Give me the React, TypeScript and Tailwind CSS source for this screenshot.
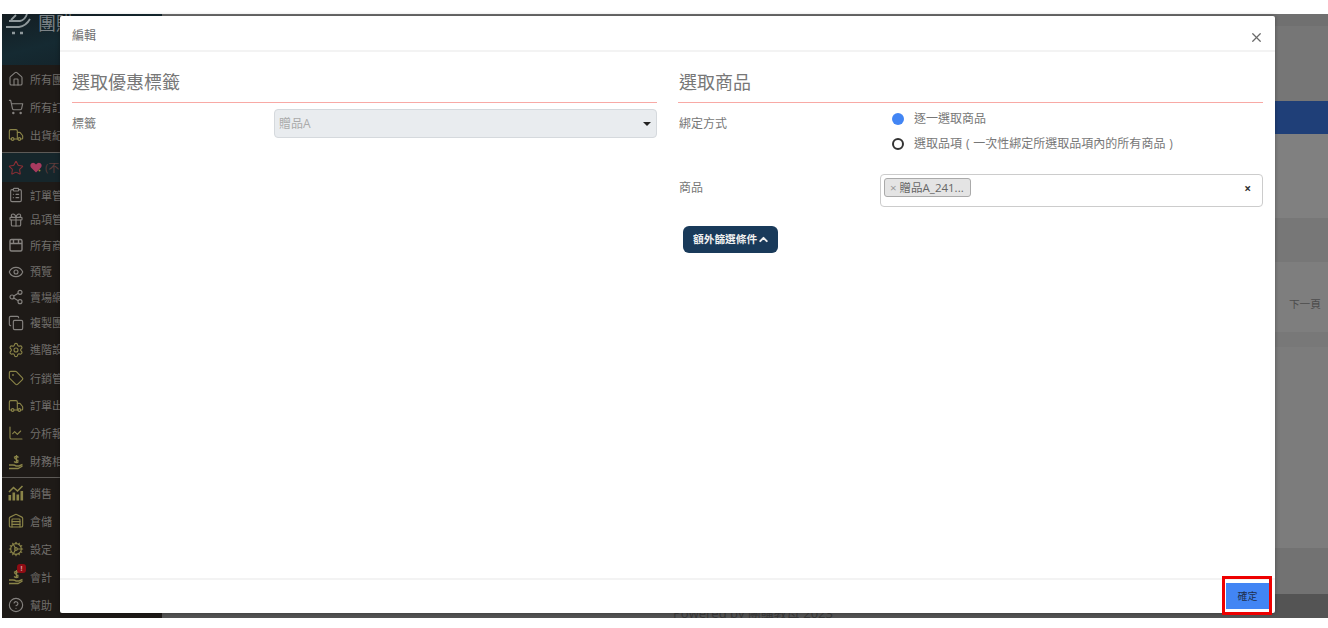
import React from "react";
import { House, ShoppingCart, Truck, Star, ClipboardList, Gift, Eye, Share2, Copy, Settings, Tag, LineChart, Warehouse, CircleHelp, ChevronUp, X, Cog } from "lucide-react";

const GOLD = "text-[#8a8448]";
const GREY = "text-[#716e6b]";

type IconType = React.ComponentType<{ size?: number; strokeWidth?: number; className?: string }>;
type Item = { label: string; Icon: IconType; gold?: boolean; h: string };

const HandSprout: IconType = ({ className }) => (
  <svg width="16" height="16" viewBox="0 0 16 16" fill="none" stroke="currentColor" strokeWidth="1.4" className={className}>
    <path d="M1 11 h4 q2 0 3 1 h3 l3.5-1.5" />
    <path d="M1 14.5 h9 l4.5-2.5" />
    <path d="M8.5 1 v8 M6 3.5 q2.5-2 4.5 0 M6 7.5 q2.5 2 4.5 0 M6.5 4 q1 1.5 4 2.5" strokeWidth="1.3" />
  </svg>
);

const SalesChart: IconType = ({ className }) => (
  <svg width="16" height="16" viewBox="0 0 16 16" fill="currentColor" className={className}>
    <rect x="0.5" y="10" width="2.6" height="5.5" />
    <rect x="4.5" y="7.5" width="2.6" height="8" />
    <rect x="8.5" y="9.5" width="2.6" height="6" />
    <rect x="12.5" y="6" width="2.6" height="9.5" />
    <path d="M1 7 L5.5 2.5 L9.5 6 L14.5 1" fill="none" stroke="currentColor" strokeWidth="1.6" />
  </svg>
);

const BoxBand: IconType = ({ className }) => (
  <svg width="16" height="16" viewBox="0 0 16 16" fill="none" stroke="currentColor" strokeWidth="1.4" className={className}>
    <rect x="2" y="2.5" width="12" height="11.5" rx="1.5" />
    <path d="M2 6.5 h12 M5.5 2.5 v4 M10.5 2.5 v4" />
  </svg>
);

const groupA: Item[] = [
  { label: "所有團購", Icon: House, h: "h-[28px]" },
  { label: "所有訂單", Icon: ShoppingCart, h: "h-[28px]" },
  { label: "出貨紀錄", Icon: Truck, gold: true, h: "h-[28px]" },
];
const groupB: Item[] = [
  { label: "訂單管理", Icon: ClipboardList, h: "h-[26px]" },
  { label: "品項管理", Icon: Gift, h: "h-[23px]" },
  { label: "所有商品", Icon: BoxBand, h: "h-[28px]" },
  { label: "預覽", Icon: Eye, h: "h-[25px]" },
  { label: "賣場網址", Icon: Share2, h: "h-[26px]" },
  { label: "複製團購", Icon: Copy, h: "h-[25px]" },
  { label: "進階設定", Icon: Settings, gold: true, h: "h-[29px]" },
  { label: "行銷管理", Icon: Tag, gold: true, h: "h-[28px]" },
  { label: "訂單出貨", Icon: Truck, gold: true, h: "h-[27px]" },
  { label: "分析報表", Icon: LineChart, gold: true, h: "h-[28px]" },
  { label: "財務相關", Icon: HandSprout, gold: true, h: "h-[29px]" },
];
const groupC: Item[] = [
  { label: "銷售", Icon: SalesChart, gold: true, h: "h-[28px]" },
  { label: "倉儲", Icon: Warehouse, gold: true, h: "h-[28px]" },
  { label: "設定", Icon: Cog, gold: true, h: "h-[28px]" },
  { label: "會計", Icon: HandSprout, gold: true, h: "h-[28px]" },
  { label: "幫助", Icon: CircleHelp, h: "h-[28px]" },
];

function NavRow({ item }: { item: Item }) {
  const { Icon } = item;
  return (
    <div className={`relative flex items-center gap-[6px] pl-[6px] ${item.h}`}>
      <Icon size={16} strokeWidth={1.7} className={item.gold ? GOLD : "text-[#85827f]"} />
      <span className={`text-[11px] leading-none whitespace-nowrap ${GREY}`}>{item.label}</span>
      {item.label === "會計" && (
        <span className="absolute left-[15px] top-[1px] flex h-[9px] w-[9px] items-center justify-center rounded-[3px] bg-[#8e0c14] text-[7px] font-bold leading-none text-[#d8a0a0]">!</span>
      )}
    </div>
  );
}

function Sidebar() {
  return (
    <aside className="flex h-full w-[160px] shrink-0 flex-col bg-[#1e1a17]">
      <div className="flex h-[51px] shrink-0 items-start gap-[7px] bg-[linear-gradient(165deg,#141d22_0%,#152a32_45%,#14252c_70%,#1c1d1c_100%)] pl-[3px]">
        <svg width="26" height="21" viewBox="0 0 26 21" fill="none" stroke="#8f989b" strokeWidth="1.8">
          <path d="M4 7 L15 7 Q20 6 22 0" />
          <path d="M1 13 L14 13 Q21 12 25 5" />
          <path d="M7 19 h3 M15 19 h3" strokeWidth="2.4" />
          <path d="M11 1 L6 6" />
        </svg>
        <span className="text-[18px] leading-[19px] text-[#7d8488]">團購</span>
      </div>
      <div className="flex shrink-0 flex-col pb-[3px]">
        {groupA.map((i) => <NavRow key={i.label} item={i} />)}
      </div>
      <div className="h-[1px] shrink-0 bg-[#5d5a57]" />
      <div className="flex h-[29px] shrink-0 items-center gap-[6px] bg-[#16262b] pl-[6px]">
        <Star size={16} strokeWidth={1.6} className="text-[#8a2f35]" />
        <svg width="12" height="11" viewBox="0 0 12 11" className="-mr-[3px]">
          <path d="M6 10.5 L1 5.5 Q-0.5 3 1.5 1.2 Q4 0 6 2.4 Q8 0 10.5 1.2 Q12.5 3 11 5.5 Z" fill="#a83a60" />
          <circle cx="9.5" cy="8.5" r="1" fill="#a08a3a" />
        </svg>
        <span className="text-[11px] leading-none text-[#5f3c3c]">(不限)</span>
      </div>
      <div className="flex shrink-0 flex-col">
        {groupB.map((i) => <NavRow key={i.label} item={i} />)}
      </div>
      <div className="mt-[1px] h-[1px] shrink-0 bg-[#5d5a57]" />
      <div className="flex shrink-0 flex-col pt-[1px]">
        {groupC.map((i) => <NavRow key={i.label} item={i} />)}
      </div>
    </aside>
  );
}

function MainBackdrop() {
  return (
    <main className="flex h-full min-w-0 flex-1 flex-col bg-[#7b7b7b]">
      <div className="h-[12px] shrink-0 bg-[#707070]" />
      <div className="h-[75px] shrink-0 bg-[#767676]" />
      <div className="h-[33px] shrink-0 bg-[#1f3f78]" />
      <div className="h-[84px] shrink-0 bg-[#808080]" />
      <div className="h-[44px] shrink-0 bg-[#777777]" />
      <div className="flex h-[70px] shrink-0 items-center justify-end bg-[#7e7e7e] pr-[7px] pt-[14px]">
        <span className="text-[10.7px] text-[#4c4c4c]">下一頁</span>
      </div>
      <div className="h-[15px] shrink-0 bg-[#787878]" />
      <div className="h-[201px] shrink-0 bg-[#7c7c7c]" />
      <div className="h-[46px] shrink-0 bg-[#727272]" />
      <div className="flex flex-1 items-end justify-center overflow-hidden bg-[#545454] pl-[16px]">
        <span className="-mb-[3px] text-[13px] leading-[16px] text-[#383838]">Powered by 團購教母 2023</span>
      </div>
    </main>
  );
}

function Radio({ on, children }: { on?: boolean; children: React.ReactNode }) {
  return (
    <div className="flex h-[25px] items-center">
      <span className={on ? "h-[12px] w-[12px] rounded-full bg-[#4285f4]" : "h-[12px] w-[12px] rounded-full border-2 border-[#333333] bg-white"} />
      <span className="ml-[10px] text-[12px] text-[#777777] [word-spacing:0.8px]">{children}</span>
    </div>
  );
}

function Modal() {
  return (
    <div className="absolute left-[60px] top-[16px] flex h-[597px] w-[1215px] flex-col rounded-[2px] bg-white text-[#666666] shadow-[0_0_4px_rgba(0,0,0,0.35)]">
      <header className="flex h-[36px] shrink-0 items-center justify-between border-b-2 border-[#f3f3f3] pl-[12px] pr-[11px] pt-[6px]">
        <span className="text-[12px] text-[#707070]">編輯</span>
        <X size={15} strokeWidth={2} className="mt-[3px] text-[#6a6a6a]" />
      </header>

      <div className="grid min-h-0 flex-1 grid-cols-2 gap-[21px] px-[12px] pt-[18px]">
        <section>
          <h2 className="h-[33px] border-b-[1.5px] border-[#f8a9a5] text-[18px] font-normal leading-[24px] text-[#777777]">選取優惠標籤</h2>
          <div className="mt-[6px] flex items-start">
            <label className="w-[202px] shrink-0 pt-[6px] text-[12px] text-[#777777]">標籤</label>
            <div className="flex h-[29px] flex-1 items-center justify-between rounded-[4px] border border-[#d5d9dd] bg-[#e9ecef] pl-[4px] pr-[5px]">
              <span className="text-[12px] text-[#aaaaaa]">贈品A</span>
              <span className="h-0 w-0 border-x-[4px] border-t-[4px] border-x-transparent border-t-[#222222]" />
            </div>
          </div>
        </section>

        <section>
          <h2 className="h-[33px] border-b-[1.5px] border-[#f8a9a5] pl-[1px] text-[18px] font-normal leading-[24px] text-[#777777]">選取商品</h2>
          <div className="mt-[3px] flex items-start">
            <label className="w-[202px] shrink-0 pl-[1px] pt-[9px] text-[12px] text-[#777777]">綁定方式</label>
            <div className="flex-1 pl-[12px]">
              <Radio on>逐一選取商品</Radio>
              <Radio>選取品項 ( 一次性綁定所選取品項內的所有商品 )</Radio>
            </div>
          </div>
          <div className="mt-[18px] flex items-start">
            <label className="w-[202px] shrink-0 pl-[1px] pt-[5px] text-[12px] text-[#777777]">商品</label>
            <div className="flex h-[33px] flex-1 items-start justify-between rounded-[4px] border border-[#cccccc] pl-[3px] pr-[11px] pt-[3px]">
              <span className="flex h-[19px] w-[87px] items-center rounded-[3px] border border-[#aaaaaa] bg-[#e4e4e4] pl-[5px] text-[11.5px] leading-none text-[#666666]">
                <span className="mr-[3px] text-[#999999]">×</span>贈品A_241...
              </span>
              <span className="mt-[4px] text-[12px] font-bold leading-[14px] text-[#333333]">×</span>
            </div>
          </div>
          <button className="ml-[5px] mt-[19px] flex h-[27px] w-[95px] items-center rounded-[6px] bg-[#193a5a] pl-[10px] text-[10.7px] font-bold text-[#f0f0f0]">
            額外篩選條件
            <ChevronUp size={13} strokeWidth={3.6} />
          </button>
        </section>
      </div>

      <footer className="relative flex h-[35px] shrink-0 items-start justify-end border-t-2 border-[#f3f3f3] pr-[6px] pt-[3px]">
        <button className="h-[26px] w-[43px] bg-[#4285f4] text-[10px] text-[#1f2f4d]">確定</button>
        <span className="absolute right-[3px] top-[-4px] h-[39px] w-[50px] border-[3px] border-[#ee0000]" />
      </footer>
    </div>
  );
}

export default function App() {
  return (
    <div className="relative h-[628px] w-[1328px] overflow-hidden bg-white pb-[10px] pl-[2px] pt-[14px] [font-family:'Open_Sans','Noto_Sans_CJK_TC',sans-serif]">
      <div className="flex h-full">
        <Sidebar />
        <MainBackdrop />
      </div>
      <Modal />
    </div>
  );
}
